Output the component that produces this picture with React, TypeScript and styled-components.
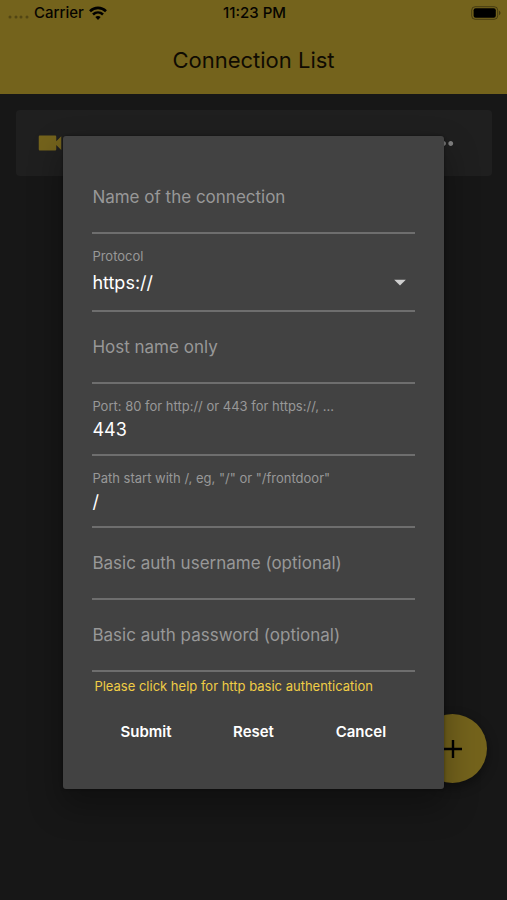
import React, { useState } from "react";
import styled, { createGlobalStyle } from "styled-components";
import { MdArrowDropDown, MdMoreHoriz, MdVideocam } from "react-icons/md";

const GlobalStyle = createGlobalStyle`
  * { box-sizing: border-box; }
  body {
    margin: 0;
    background: #2e2e2e;
    font-family: Inter, "Liberation Sans", sans-serif;
  }
`;

const Screen = styled.div`
  position: relative;
  display: flex;
  flex-direction: column;
  min-height: 100vh;
  background: #2e2e2e;
`;

const Header = styled.header`
  background: #e8c638;
  color: #1e1604;
`;

const StatusBar = styled.div`
  display: grid;
  grid-template-columns: 1fr auto 1fr;
  align-items: center;
  height: 26px;
  padding: 0 6px 0 8px;
  font-size: 15px;
  font-weight: 500;
  line-height: 26px;
  color: #0c0900;
`;

const Signal = styled.div`
  display: flex;
  align-items: center;
  gap: 5px;
`;

const BatterySlot = styled.div`
  display: flex;
  justify-content: flex-end;
`;

const Title = styled.h1`
  margin: 0;
  height: 68px;
  line-height: 68px;
  text-align: center;
  font-size: 22px;
  font-weight: 400;
`;

const ConnectionCard = styled.section`
  display: flex;
  align-items: center;
  justify-content: space-between;
  height: 66px;
  margin: 16px 15px 0 16px;
  padding: 0 34px 0 19px;
  border-radius: 4px;
  background: #3e3e3e;
  color: #e8c638;
`;

const IconButton = styled.button`
  display: flex;
  padding: 0;
  border: 0;
  background: none;
  color: #fff;
`;

const AddButton = styled.button`
  position: absolute;
  right: 20px;
  bottom: 117px;
  display: grid;
  place-items: center;
  width: 69px;
  height: 69px;
  padding: 0;
  border: 0;
  border-radius: 50%;
  background: #e8c638;
  color: #000;
  box-shadow: 0 4px 12px rgba(0, 0, 0, 0.4);
`;

const Backdrop = styled.div`
  position: absolute;
  inset: 0;
  display: flex;
  justify-content: center;
  align-items: flex-start;
  padding-top: 136px;
  background: rgba(0, 0, 0, 0.5);
`;

const Dialog = styled.form`
  width: 75%;
  padding: 26px 29px 34px;
  border-radius: 3px;
  background: #424242;
  box-shadow: 0 16px 32px 3px rgba(0, 0, 0, 0.3), 0 0 3px rgba(0, 0, 0, 0.4);
`;

const Field = styled.div<{ $tall?: boolean }>`
  position: relative;
  display: flex;
  flex-direction: column;
  height: ${(p) => (p.$tall ? 78 : 72)}px;
  padding-top: 13px;
  border-bottom: 2px solid #6e6e6e;
`;

const Label = styled.label<{ $floating: boolean }>`
  position: ${(p) => (p.$floating ? "static" : "absolute")};
  inset: 0;
  height: ${(p) => (p.$floating ? "18px" : "auto")};
  line-height: ${(p) => (p.$floating ? 18 : 70)}px;
  font-size: ${(p) => (p.$floating ? 13 : 17)}px;
  color: #989898;
  white-space: nowrap;
  pointer-events: none;
`;

const TextInput = styled.input`
  width: 100%;
  height: 28px;
  padding: 0;
  border: 0;
  outline: 0;
  background: transparent;
  font: inherit;
  font-size: 18px;
  color: #fff;
`;

const SelectRow = styled.div`
  display: flex;
  align-items: center;
  height: 34px;
  padding-right: 1px;
  color: #cfcfcf;
`;

const Select = styled.select`
  flex: 1;
  padding: 0;
  border: 0;
  outline: 0;
  appearance: none;
  background: transparent;
  font: inherit;
  font-size: 18px;
  color: #fff;
`;

const Help = styled.p`
  margin: 0;
  padding: 5px 2px 0;
  line-height: 18px;
  font-size: 13px;
  color: #f0cd45;
  white-space: nowrap;
`;

const Actions = styled.div`
  display: grid;
  grid-template-columns: repeat(3, 1fr);
  margin-top: 12px;
`;

const ActionButton = styled.button`
  height: 48px;
  padding: 0;
  border: 0;
  background: none;
  font: inherit;
  font-size: 15px;
  font-weight: 600;
  color: #fff;
`;

function TextField({ id, label, initial = "", type = "text" }: { id: string; label: string; initial?: string; type?: string }) {
  const [value, setValue] = useState(initial);
  return (
    <Field>
      <Label htmlFor={id} $floating={value !== ""}>{label}</Label>
      <TextInput id={id} type={type} value={value} onChange={(e) => setValue(e.target.value)} />
    </Field>
  );
}

function SignalDots() {
  return (
    <svg width="21" height="12" viewBox="0 0 21 12" fill="#0c0900" opacity="0.3" aria-hidden="true">
      {[2, 8, 13, 19].map((x) => <circle key={x} cx={x} cy="10" r="1.5" />)}
    </svg>
  );
}

function Wifi() {
  return (
    <svg width="18" height="14" viewBox="0 0 18 14" fill="none" stroke="#000" strokeWidth="2.6" aria-hidden="true">
      <path d="M1 5.2C5.6.8 12.4.8 17 5.2" />
      <path d="M4 8.5c2.9-2.7 7.1-2.7 10 0" />
      <path d="M6.3 11.1c1.6-1.4 3.8-1.4 5.4 0L9 13.9z" fill="#000" stroke="none" />
    </svg>
  );
}

function Battery() {
  return (
    <svg width="30" height="14" viewBox="0 0 30 14" aria-hidden="true">
      <rect x="0.7" y="0.7" width="26" height="12.6" rx="3.5" fill="none" stroke="#000" strokeOpacity="0.4" />
      <rect x="2.6" y="2.3" width="22.2" height="9.4" rx="2" fill="#000" />
      <path d="M28 4.8c2 .7 2 3.7 0 4.4z" fill="#000" fillOpacity="0.4" />
    </svg>
  );
}

export default function App() {
  const [protocol, setProtocol] = useState("https://");
  return (
    <>
      <GlobalStyle />
      <Screen>
        <Header>
          <StatusBar>
            <Signal><SignalDots /><span>Carrier</span><Wifi /></Signal>
            <span>11:23 PM</span>
            <BatterySlot><Battery /></BatterySlot>
          </StatusBar>
          <Title>Connection List</Title>
        </Header>
        <ConnectionCard>
          <MdVideocam size={30} />
          <IconButton type="button" aria-label="More"><MdMoreHoriz size={29} /></IconButton>
        </ConnectionCard>
        <AddButton type="button" aria-label="Add connection">
          <svg width="18" height="18" viewBox="0 0 18 18" stroke="currentColor" strokeWidth="2.4">
            <path d="M9 0v18M0 9h18" />
          </svg>
        </AddButton>
        <Backdrop>
          <Dialog role="dialog" aria-label="Connection" onSubmit={(e) => e.preventDefault()}>
            <TextField id="name" label="Name of the connection" />
            <Field $tall>
              <Label htmlFor="protocol" $floating>Protocol</Label>
              <SelectRow>
                <Select id="protocol" value={protocol} onChange={(e) => setProtocol(e.target.value)}>
                  <option>https://</option>
                  <option>http://</option>
                </Select>
                <MdArrowDropDown size={28} />
              </SelectRow>
            </Field>
            <TextField id="host" label="Host name only" />
            <TextField id="port" label="Port: 80 for http:// or 443 for https://, ..." initial="443" />
            <TextField id="path" label={'Path start with /, eg, "/" or "/frontdoor"'} initial="/" />
            <TextField id="username" label="Basic auth username (optional)" />
            <TextField id="password" type="password" label="Basic auth password (optional)" />
            <Help>Please click help for http basic authentication</Help>
            <Actions>
              <ActionButton type="submit">Submit</ActionButton>
              <ActionButton type="reset">Reset</ActionButton>
              <ActionButton type="button">Cancel</ActionButton>
            </Actions>
          </Dialog>
        </Backdrop>
      </Screen>
    </>
  );
}
